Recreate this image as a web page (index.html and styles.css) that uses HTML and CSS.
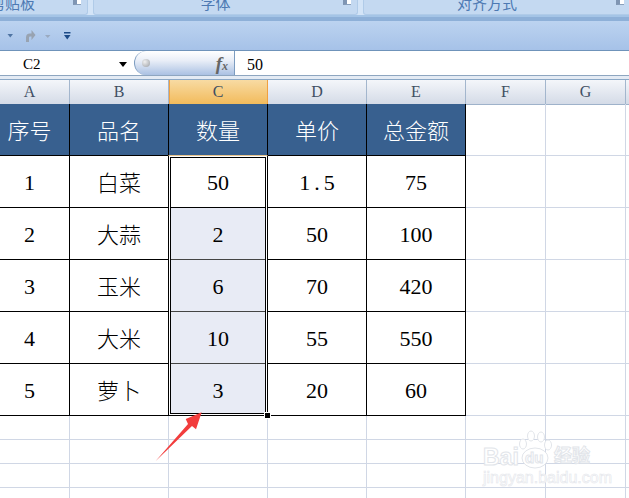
FILE: index.html
```html
<!DOCTYPE html>
<html lang="zh">
<head>
<meta charset="utf-8">
<title>Excel</title>
<link rel="stylesheet" href="styles.css">
</head>
<body>
<div class="app">
  <div class="ribbon">
    <div class="group g1"><span class="glabel">剪贴板</span><span class="launch"></span></div>
    <div class="group g2"><span class="glabel">字体</span><span class="launch"></span></div>
    <div class="group g3"><span class="glabel">对齐方式</span><span class="launch"></span></div>
  </div>
  <div class="qat">
    <svg class="qat-icons" width="72" height="16" viewBox="0 0 72 16">
      <path d="M7.500 6h5.500l-2.750 3.500z" fill="#4f74a3"/>
      <path d="M26 14V9.500q0-4 4-4h1.500V2l4 5-4 5V8.500H30q-1 0-1 1V14z" fill="#98a3b1"/>
      <path d="M45 7h5.500l-2.750 3z" fill="#9aaac0"/>
      <path d="M64 4h6.500v1.500H64zM64 7h6.500l-3.250 4.500z" fill="#1c4b88"/>
    </svg>
  </div>
  <div class="fbar">
    <div class="namebox"><span class="cellref">C2</span><span class="caret"></span></div>
    <div class="pill">
      <span class="dot"></span>
      <span class="fx">f<small>x</small></span>
    </div>
    <div class="fvalue">50</div>
  </div>
  <div class="gap"></div>
  <div class="colhead">
    <div class="ch a">A</div><div class="ch">B</div><div class="ch on">C</div><div class="ch">D</div><div class="ch">E</div><div class="ch">F</div><div class="ch">G</div><div class="ch"></div>
  </div>
  <div class="sheet">
    <div class="c hd a t">序号</div><div class="c hd t">品名</div><div class="c hd t">数量</div><div class="c hd t">单价</div><div class="c hd t">总金额</div><div class="b"></div><div class="b"></div><div class="b"></div>
    <div class="c a">1</div><div class="c t">白菜</div><div class="c">50</div><div class="c wide">1.5</div><div class="c">75</div><div class="b"></div><div class="b"></div><div class="b"></div>
    <div class="c a">2</div><div class="c t">大蒜</div><div class="c p">2</div><div class="c">50</div><div class="c">100</div><div class="b"></div><div class="b"></div><div class="b"></div>
    <div class="c a">3</div><div class="c t">玉米</div><div class="c p">6</div><div class="c">70</div><div class="c">420</div><div class="b"></div><div class="b"></div><div class="b"></div>
    <div class="c a">4</div><div class="c t">大米</div><div class="c p">10</div><div class="c">55</div><div class="c">550</div><div class="b"></div><div class="b"></div><div class="b"></div>
    <div class="c a">5</div><div class="c t">萝卜</div><div class="c p">3</div><div class="c">20</div><div class="c">60</div><div class="b"></div><div class="b"></div><div class="b"></div>
    <div class="b"></div><div class="b"></div><div class="b"></div><div class="b"></div><div class="b"></div><div class="b"></div><div class="b"></div><div class="b"></div>
    <div class="b"></div><div class="b"></div><div class="b"></div><div class="b"></div><div class="b"></div><div class="b"></div><div class="b"></div><div class="b"></div>
    <div class="b"></div><div class="b"></div><div class="b"></div><div class="b"></div><div class="b"></div><div class="b"></div><div class="b"></div><div class="b"></div>
    <div class="b"></div><div class="b"></div><div class="b"></div><div class="b"></div><div class="b"></div><div class="b"></div><div class="b"></div><div class="b"></div>
    <div class="sel"><span class="handle"></span></div>
    <svg class="arrow" width="60" height="60" viewBox="0 0 60 60">
      <path d="M0.700 50 33 13 30.700 8 46.700 1.300 41 18.300 37 15z" fill="#f23d3d"/>
    </svg>
    <div class="mark">
      <svg class="paw" width="34" height="40" viewBox="0 0 34 40">
        <g fill="#fff" stroke="#e2e5ea">
          <ellipse cx="5" cy="14" rx="3.500" ry="5"/>
          <ellipse cx="13" cy="6" rx="3.500" ry="5"/>
          <ellipse cx="23" cy="7" rx="3.500" ry="5"/>
          <ellipse cx="30" cy="15" rx="3.500" ry="5"/>
          <ellipse cx="17" cy="28" rx="13" ry="10"/>
        </g>
      </svg>
      <span class="bai">Bai</span><span class="du">du</span><span class="jy">经验</span>
      <span class="url">jingyan.baidu.com</span>
    </div>
  </div>
</div>
</body>
</html>
```
FILE: styles.css
```css
* { box-sizing: border-box; }
html, body { margin: 0; padding: 0; background: #fff; }
.app {
  width: 629px;
  height: 498px;
  overflow: hidden;
  display: flex;
  flex-direction: column;
  font-family: "Liberation Serif", "Noto Sans CJK SC", serif;
}

/* ribbon remnant */
.ribbon {
  display: flex;
  gap: 5px;
  height: 17px;
  flex: none;
  background: #d3e4f7;
  margin-left: -43px;
  width: 680px;
  border-bottom: 2px solid #a4c4e6;
}
.group {
  height: 15px;
  display: flex;
  align-items: flex-end;
  overflow: hidden;
  background: #c4d9f1;
  border: 1px solid #b0cbe8;
  border-top: 0;
  border-radius: 0 0 3px 3px;
  flex: none;
}
.g1 { width: 131px; }
.g2 { width: 265px; }
.g3 { width: 268px; }
.glabel {
  flex: 1;
  text-align: center;
  font: 15px/15px "Noto Sans CJK SC", sans-serif;
  color: #4d79b3;
  margin-bottom: 4px;
  padding-right: 6px;
}
.launch {
  flex: none;
  width: 8px;
  height: 5px;
  align-self: flex-start;
  margin-right: 6px;
  background: #fff;
  border-left: 4px solid #7f95b3;
  border-bottom: 1px solid #8aa0bc;
}

/* quick access */
.qat {
  height: 34px;
  flex: none;
  display: flex;
  align-items: center;
  background: linear-gradient(#bcd3f0, #a6c2e8);
  border-top: 4px solid #8eb0d8;
  border-bottom: 1px solid #6f93ba;
}
.qat-icons { flex: none; }

/* formula bar */
.fbar {
  height: 25px;
  flex: none;
  display: flex;
  background: #fff;
  border-bottom: 1px solid #8ea6c0;
}
.namebox {
  width: 134px;
  flex: none;
  display: flex;
  align-items: center;
  justify-content: space-between;
  padding: 3px 7px 0 23px;
}
.cellref { font-size: 15px; }
.caret {
  width: 0;
  height: 0;
  border-style: solid;
  border-width: 5px 4.500px 0;
  border-color: #000 transparent transparent;
}
.pill {
  width: 101px;
  flex: none;
  display: flex;
  align-items: center;
  justify-content: space-between;
  padding: 0 6px 0 7px;
  background: linear-gradient(#fff, #e9eef7 40%, #aac1e3);
  border: 1px solid #7c9cc0;
  border-top: 0;
  border-bottom: 0;
  border-radius: 14px 0 0 14px;
}
.dot {
  width: 8px;
  height: 8px;
  border-radius: 50%;
  background: radial-gradient(circle at 35% 35%, #f0f0f0, #9a9ea4);
}
.fx {
  font: italic 700 19px/1 "Liberation Serif", serif;
  color: #666;
}
.fx small { font-size: 12px; }
.fvalue { padding: 3px 0 0 12px; font-size: 16px; line-height: 21px; }

.gap {
  height: 4px;
  flex: none;
  background: #e4ebf4;
  border-bottom: 1px solid #8ba8c6;
}

/* column headers */
.colhead, .sheet {
  display: grid;
  grid-template-columns: 70px 99px 99px 99px 99px 80px 80px 40px;
  width: 667px;
  flex: none;
}
.colhead { height: 24px; }
.ch {
  background: linear-gradient(#f4f6fa, #d4dbe7);
  border-right: 1px solid #a3b6cd;
  border-bottom: 1px solid #9eb2ca;
  text-align: center;
  font-size: 16px;
  line-height: 24px;
  color: #3f4f63;
}
.ch.on {
  background: linear-gradient(#f8dba3, #f2bb5c);
  border-right-color: #f0a040;
  border-bottom-color: #f0a040;
  box-shadow: inset 1px 0 0 #f0a040;
}
.a { padding-right: 10px; }

/* sheet */
.sheet {
  position: relative;
  grid-template-rows: repeat(6, 52px) repeat(4, 24px);
}
.c {
  display: flex;
  align-items: center;
  justify-content: center;
  border-right: 1px solid #000;
  border-bottom: 1px solid #000;
  font-size: 22px;
  color: #000;
  font-weight: 300;
  padding-top: 2px;
}
.c.t { padding-top: 0; padding-bottom: 1px; }
.hd {
  background: #38608f;
  color: #fff;
}
.p {
  background: #e8ebf5;
  border-bottom-color: #444;
}
.wide { letter-spacing: 4px; padding-left: 4px; }
.b {
  border-right: 1px solid #d0d7e5;
  border-bottom: 1px solid #d0d7e5;
}

/* selection, annotation and watermark over the grid */
.sel {
  position: absolute;
  left: 168px;
  top: 51px;
  width: 100px;
  height: 261px;
  border: 1px solid #000;
  border-top-color: #e6c38c;
  box-shadow: inset 0 0 0 1px #fff, inset 0 0 0 2px #000;
}
.handle {
  position: absolute;
  right: -3px;
  bottom: -3px;
  width: 5px;
  height: 5px;
  background: #000;
  border: 1px solid #000;
  outline: 1px solid #fff;
}
.arrow {
  position: absolute;
  left: 155px;
  top: 307px;
}
.mark {
  position: absolute;
  left: 483px;
  top: 326px;
  width: 120px;
  height: 60px;
}
.paw { position: absolute; left: 35px; top: 0; }
.bai, .du, .jy, .url {
  position: absolute;
  color: #fff;
  -webkit-text-stroke: 1px #e2e5ea;
  font-family: "Liberation Sans", "Noto Sans CJK SC", sans-serif;
  font-weight: 700;
  white-space: nowrap;
}
.bai { left: 0; top: 13px; font-size: 23px; line-height: 28px; }
.du { left: 42px; top: 19px; font-size: 15px; line-height: 18px; }
.jy { left: 71px; top: 15px; font-size: 18px; line-height: 22px; }
.url { left: 0; top: 39px; font-size: 16px; line-height: 18px; font-weight: 400; -webkit-text-stroke: 0.6px #e4e6eb; }
```
